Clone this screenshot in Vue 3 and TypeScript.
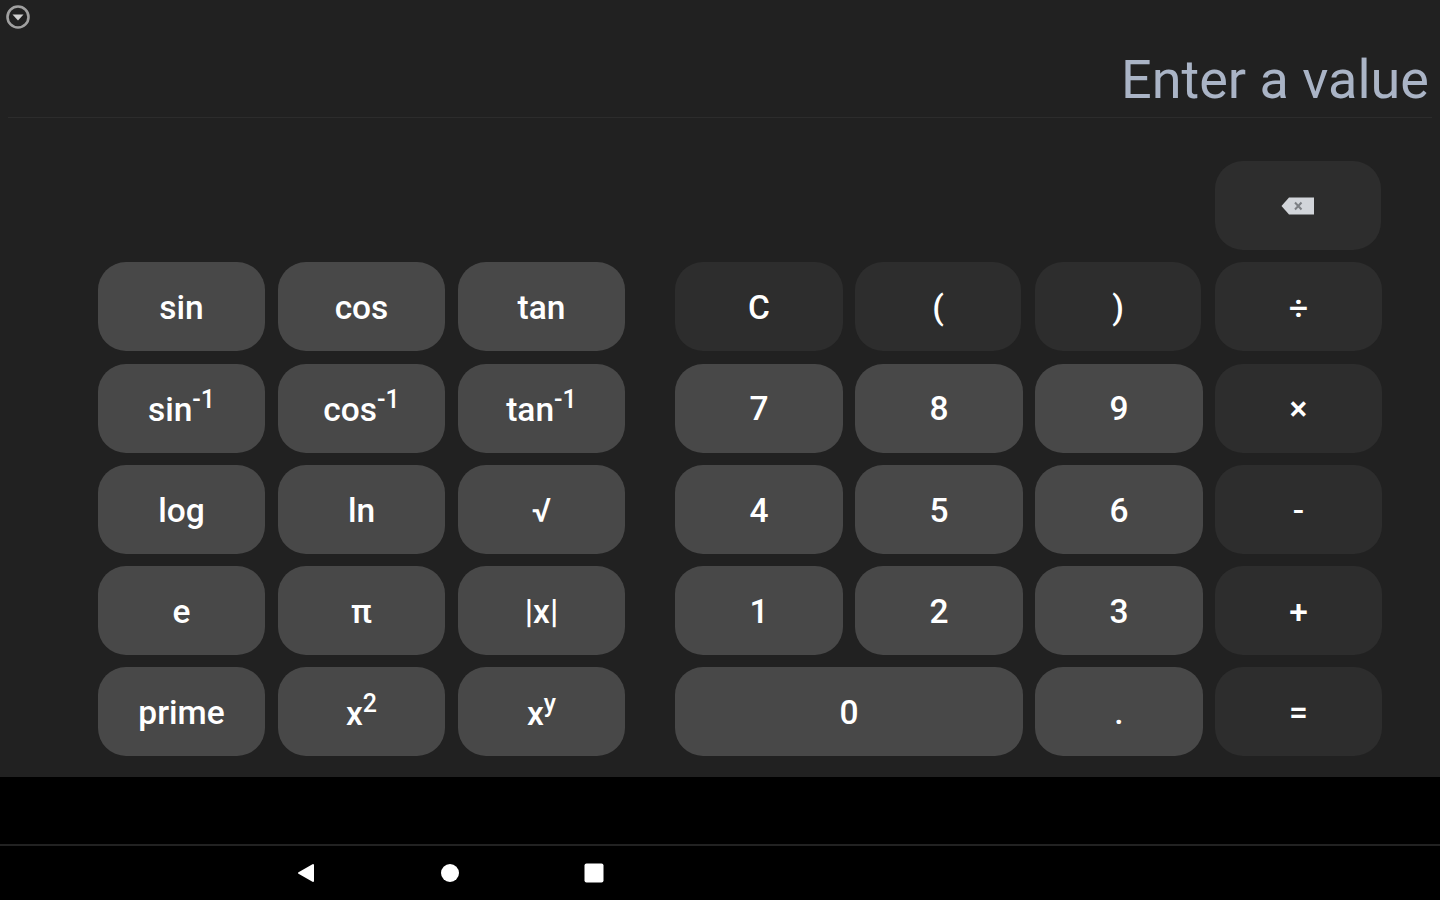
<template>
  <div class="screen">
    <div class="calc">
      <div class="top-bar">
        <svg class="collapse" width="26" height="26" viewBox="0 0 26 26">
          <circle cx="13" cy="13" r="10.5" fill="none" stroke="#a0a0a0" stroke-width="2.6" />
          <path d="M7.5 10.5h11L13 16.5z" fill="#d0d0d0" />
        </svg>
      </div>
      <div class="display">Enter a value</div>
      <div class="keypad">
        <div class="keys-left">
          <button v-for="key in leftKeys" :key="key.label + (key.sup || '')" class="key light" :class="{ raised: key.sup }">
            {{ key.label }}<sup v-if="key.sup">{{ key.sup }}</sup>
          </button>
        </div>
        <div class="keys-right">
          <button class="key dark backspace" aria-label="backspace">
            <svg width="36" height="20" viewBox="0 0 36 20">
              <path d="M9 1.5h25v17H9L1.5 10z" fill="#d2d5da" />
              <path d="M15 6.5l6.5 7M21.5 6.5l-6.5 7" stroke="#7c7f84" stroke-width="2" />
            </svg>
          </button>
          <button
            v-for="key in rightKeys"
            :key="key.label"
            class="key"
            :class="[key.dark ? 'dark' : 'light', { wide: key.wide, narrow: key.narrow }]"
          >
            {{ key.label }}
          </button>
        </div>
      </div>
    </div>
    <div class="nav-area">
      <div class="nav-bar">
        <svg class="nav-icon" width="20" height="20" viewBox="0 0 20 20"><path d="M17 2v16L3 10z" fill="#fff" stroke="#fff" stroke-width="2" stroke-linejoin="round" /></svg>
        <svg class="nav-icon" width="20" height="20" viewBox="0 0 20 20"><circle cx="10" cy="10" r="9" fill="#fff" /></svg>
        <svg class="nav-icon" width="20" height="20" viewBox="0 0 20 20"><rect x="0.5" y="0.5" width="19" height="19" rx="2" fill="#fff" /></svg>
      </div>
    </div>
  </div>
</template>

<script setup lang="ts">
interface LeftKey {
  label: string;
  sup?: string;
}

interface RightKey {
  label: string;
  dark?: boolean;
  wide?: boolean;
  narrow?: boolean;
}

const leftKeys: LeftKey[] = [
  { label: 'sin' },
  { label: 'cos' },
  { label: 'tan' },
  { label: 'sin', sup: '-1' },
  { label: 'cos', sup: '-1' },
  { label: 'tan', sup: '-1' },
  { label: 'log' },
  { label: 'ln' },
  { label: '√' },
  { label: 'e' },
  { label: 'π' },
  { label: '|x|' },
  { label: 'prime' },
  { label: 'x', sup: '2' },
  { label: 'x', sup: 'y' },
];

const rightKeys: RightKey[] = [
  { label: 'C', dark: true },
  { label: '(', dark: true, narrow: true },
  { label: ')', dark: true, narrow: true },
  { label: '÷', dark: true },
  { label: '7' },
  { label: '8' },
  { label: '9' },
  { label: '×', dark: true },
  { label: '4' },
  { label: '5' },
  { label: '6' },
  { label: '-', dark: true },
  { label: '1' },
  { label: '2' },
  { label: '3' },
  { label: '+', dark: true },
  { label: '0', wide: true },
  { label: '.' },
  { label: '=', dark: true },
];
</script>

<style>
html,
body {
  margin: 0;
  background: #000;
}
</style>

<style scoped>
.screen {
  width: 1440px;
  height: 900px;
  display: flex;
  flex-direction: column;
  overflow: hidden;
  font-family: Roboto, "Liberation Sans", sans-serif;
}

.calc {
  height: 777px;
  background: #212121;
  box-sizing: border-box;
}

.top-bar {
  height: 35px;
  padding-left: 5px;
  padding-top: 4px;
  box-sizing: border-box;
}

.collapse {
  display: block;
}

.display {
  height: 83px;
  margin: 0 8px;
  padding-right: 3px;
  box-sizing: border-box;
  border-bottom: 1px solid #2c2c2c;
  text-align: right;
  color: #aab4c6;
  font-size: 54px;
  line-height: 90px;
}

.keypad {
  display: flex;
  align-items: flex-end;
  gap: 50px;
  padding: 43px 0 0 98px;
}

.keys-left,
.keys-right {
  display: grid;
  grid-auto-rows: 89px;
  row-gap: 12.25px;
}

.keys-left {
  grid-template-columns: repeat(3, 167px);
  column-gap: 13px;
}

.keys-right {
  grid-template-columns: repeat(3, 168px) 167px;
  column-gap: 12px;
}

.key {
  border: none;
  padding: 2px 0 0;
  border-radius: 28px;
  color: #fff;
  font-family: inherit;
  font-size: 33.5px;
  font-weight: 500;
  line-height: 1;
}

.raised {
  padding-top: 4px;
}

.key sup {
  font-size: 25px;
  line-height: 0;
  vertical-align: 13px;
}

.light {
  background: #484848;
}

.dark {
  background: #2d2d2d;
}

.backspace {
  grid-column: 4;
  margin-right: 1px;
  padding: 0;
  display: flex;
  align-items: center;
  justify-content: center;
}

.wide {
  grid-column: span 2;
}

.narrow {
  margin-right: 2px;
}

.nav-area {
  flex: 1;
  background: #000;
  display: flex;
  flex-direction: column;
  justify-content: flex-end;
}

.nav-bar {
  height: 54px;
  border-top: 2px solid #222;
  display: flex;
  align-items: center;
  gap: 124px;
  padding-left: 296px;
}

.nav-icon {
  display: block;
}
</style>
